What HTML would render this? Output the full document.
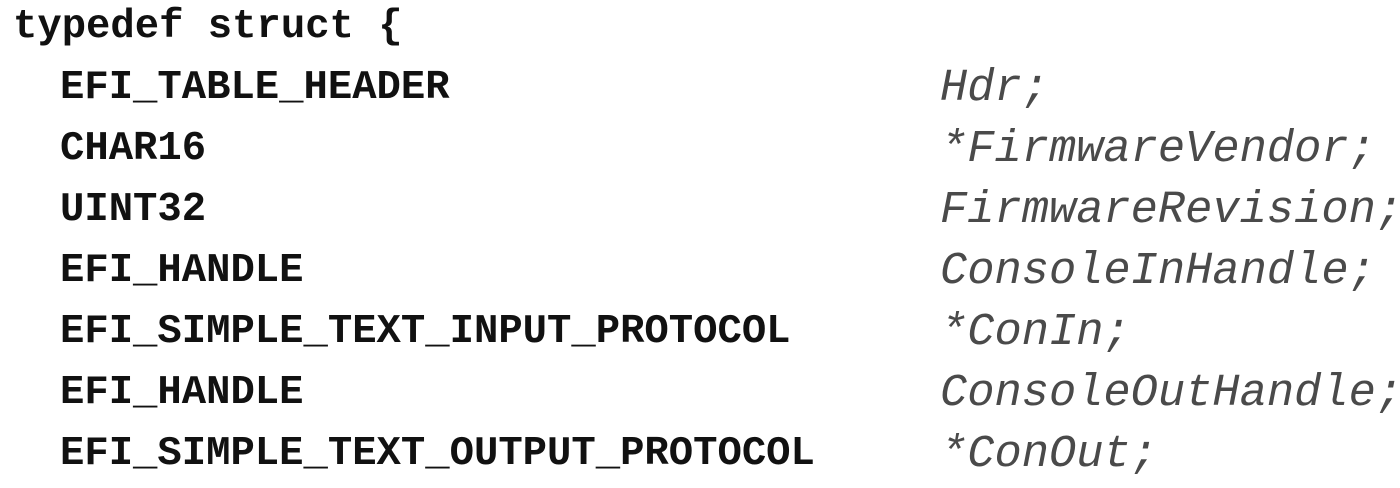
<!DOCTYPE html>
<html><head><meta charset="utf-8"><style>
html,body{margin:0;padding:0;background:#fff;width:1400px;height:488px;overflow:hidden}
.wrap{position:absolute;left:0;top:-3px}
.l{height:61px;line-height:61px;white-space:pre;position:relative;font-family:"Liberation Mono","Courier New",monospace}
.a{position:absolute;left:60px;font-weight:bold;font-size:40.6px;color:#111}
.b{position:absolute;left:940px;font-style:italic;font-size:45.4px;color:#4a4a4a}
.t{position:absolute;left:13px;font-weight:bold;font-size:40.6px;color:#111}
</style></head><body>
<div class="wrap">
<div class="l"><span class="t">typedef struct {</span></div>
<div class="l"><span class="a">EFI_TABLE_HEADER</span><span class="b">Hdr;</span></div>
<div class="l"><span class="a">CHAR16</span><span class="b">*FirmwareVendor;</span></div>
<div class="l"><span class="a">UINT32</span><span class="b">FirmwareRevision;</span></div>
<div class="l"><span class="a">EFI_HANDLE</span><span class="b">ConsoleInHandle;</span></div>
<div class="l"><span class="a">EFI_SIMPLE_TEXT_INPUT_PROTOCOL</span><span class="b">*ConIn;</span></div>
<div class="l"><span class="a">EFI_HANDLE</span><span class="b">ConsoleOutHandle;</span></div>
<div class="l"><span class="a">EFI_SIMPLE_TEXT_OUTPUT_PROTOCOL</span><span class="b">*ConOut;</span></div>
</div>
</body></html>
